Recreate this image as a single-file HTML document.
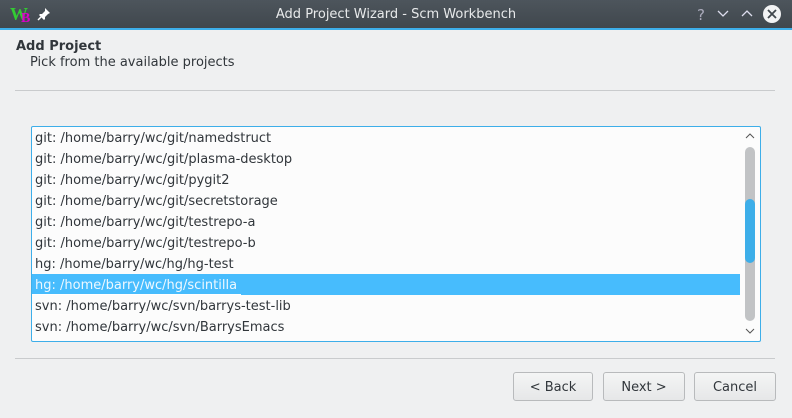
<html><head><style>
body{margin:0;width:792px;height:418px;background:#eff0f1;font-family:"DejaVu Sans","Liberation Sans",sans-serif;font-size:13px;color:#31363b;position:relative;overflow:hidden}
.tb{position:absolute;left:0;top:0;width:792px;height:28px;background:linear-gradient(#4d555c,#40474d);color:#e8eaeb;border-bottom:2px solid #3daee9}
.a{position:absolute}
.row{position:absolute;left:35px;height:21px;line-height:23px;white-space:nowrap}
.btn{position:absolute;top:372px;height:27px;border:1px solid #b8babc;border-radius:3px;background:linear-gradient(#f4f5f5,#e6e7e8);text-align:center;line-height:29px;font-size:13px}
</style></head><body>
<div class="tb">
<div class="a" style="left:10px;top:4px;font-family:'Liberation Serif',serif;font-size:18px;color:#3c3;font-weight:bold">W</div>
<div class="a" style="left:21px;top:11px;font-family:'Liberation Serif',serif;font-size:14px;color:#d0c;font-weight:bold">B</div>
<svg class="a" style="left:37px;top:7px" width="14" height="14"><path d="M8 1l5 5-2 1-3 3 0 2-1 1-5-5 1-1 2 0 3-3z" fill="#fff"/><path d="M4 10l-3 3" stroke="#fff" stroke-width="1.5"/></svg>
<div class="a" style="left:0;width:792px;top:7px;text-align:center;font-size:13px">Add Project Wizard - Scm Workbench</div>
<div class="a" style="left:697px;top:6px;font-size:15px;color:#aab">?</div>
<svg class="a" style="left:716px;top:9px" width="14" height="10"><path d="M2 2l5 5 5-5" stroke="#dde" stroke-width="1.3" fill="none"/></svg>
<svg class="a" style="left:740px;top:9px" width="14" height="10"><path d="M2 7l5-5 5 5" stroke="#dde" stroke-width="1.3" fill="none"/></svg>
<svg class="a" style="left:762px;top:4px" width="20" height="20"><circle cx="10" cy="10" r="9" fill="#f2f3f4"/><path d="M6 6l8 8M14 6l-8 8" stroke="#40474d" stroke-width="1.8"/></svg>
</div>
<div class="a" style="left:16px;top:39px;font-weight:bold">Add Project</div>
<div class="a" style="left:30px;top:55px">Pick from the available projects</div>
<div class="a" style="left:15px;top:90px;width:760px;height:1px;background:#c9cbcd"></div>
<div class="a" style="left:31px;top:126px;width:728px;height:214px;border:1px solid #3daee9;background:#fcfcfc;border-radius:2px"></div>
<div class="a" style="left:32px;top:274px;width:708px;height:21px;background:#47bcfd"></div>
<div class="row" style="top:127px">git: /home/barry/wc/git/namedstruct</div>
<div class="row" style="top:148px">git: /home/barry/wc/git/plasma-desktop</div>
<div class="row" style="top:169px">git: /home/barry/wc/git/pygit2</div>
<div class="row" style="top:190px">git: /home/barry/wc/git/secretstorage</div>
<div class="row" style="top:211px">git: /home/barry/wc/git/testrepo-a</div>
<div class="row" style="top:232px">git: /home/barry/wc/git/testrepo-b</div>
<div class="row" style="top:253px">hg: /home/barry/wc/hg/hg-test</div>
<div class="row" style="top:274px;color:#eef8ff;left:32px;padding-left:3px;border-bottom:1px solid #fff;height:20px;line-height:23px">hg: /home/barry/wc/hg/scintilla&nbsp;</div>
<div class="row" style="top:295px">svn: /home/barry/wc/svn/barrys-test-lib</div>
<div class="row" style="top:316px">svn: /home/barry/wc/svn/BarrysEmacs</div>
<svg class="a" style="left:744px;top:132px" width="12" height="8"><path d="M2 6l4-4 4 4" stroke="#555" fill="none"/></svg>
<div class="a" style="left:745px;top:147px;width:10px;height:174px;border-radius:5px;background:#c1c3c5"></div>
<div class="a" style="left:745px;top:199px;width:10px;height:64px;border-radius:5px;background:#3daee9"></div>
<svg class="a" style="left:744px;top:327px" width="12" height="8"><path d="M2 2l4 4 4-4" stroke="#555" fill="none"/></svg>
<div class="a" style="left:15px;top:358px;width:760px;height:1px;background:#c9cbcd"></div>
<div class="btn" style="left:513px;width:78px">&lt; Back</div>
<div class="btn" style="left:603px;width:80px">Next &gt;</div>
<div class="btn" style="left:694px;width:80px">Cancel</div>
</body></html>
